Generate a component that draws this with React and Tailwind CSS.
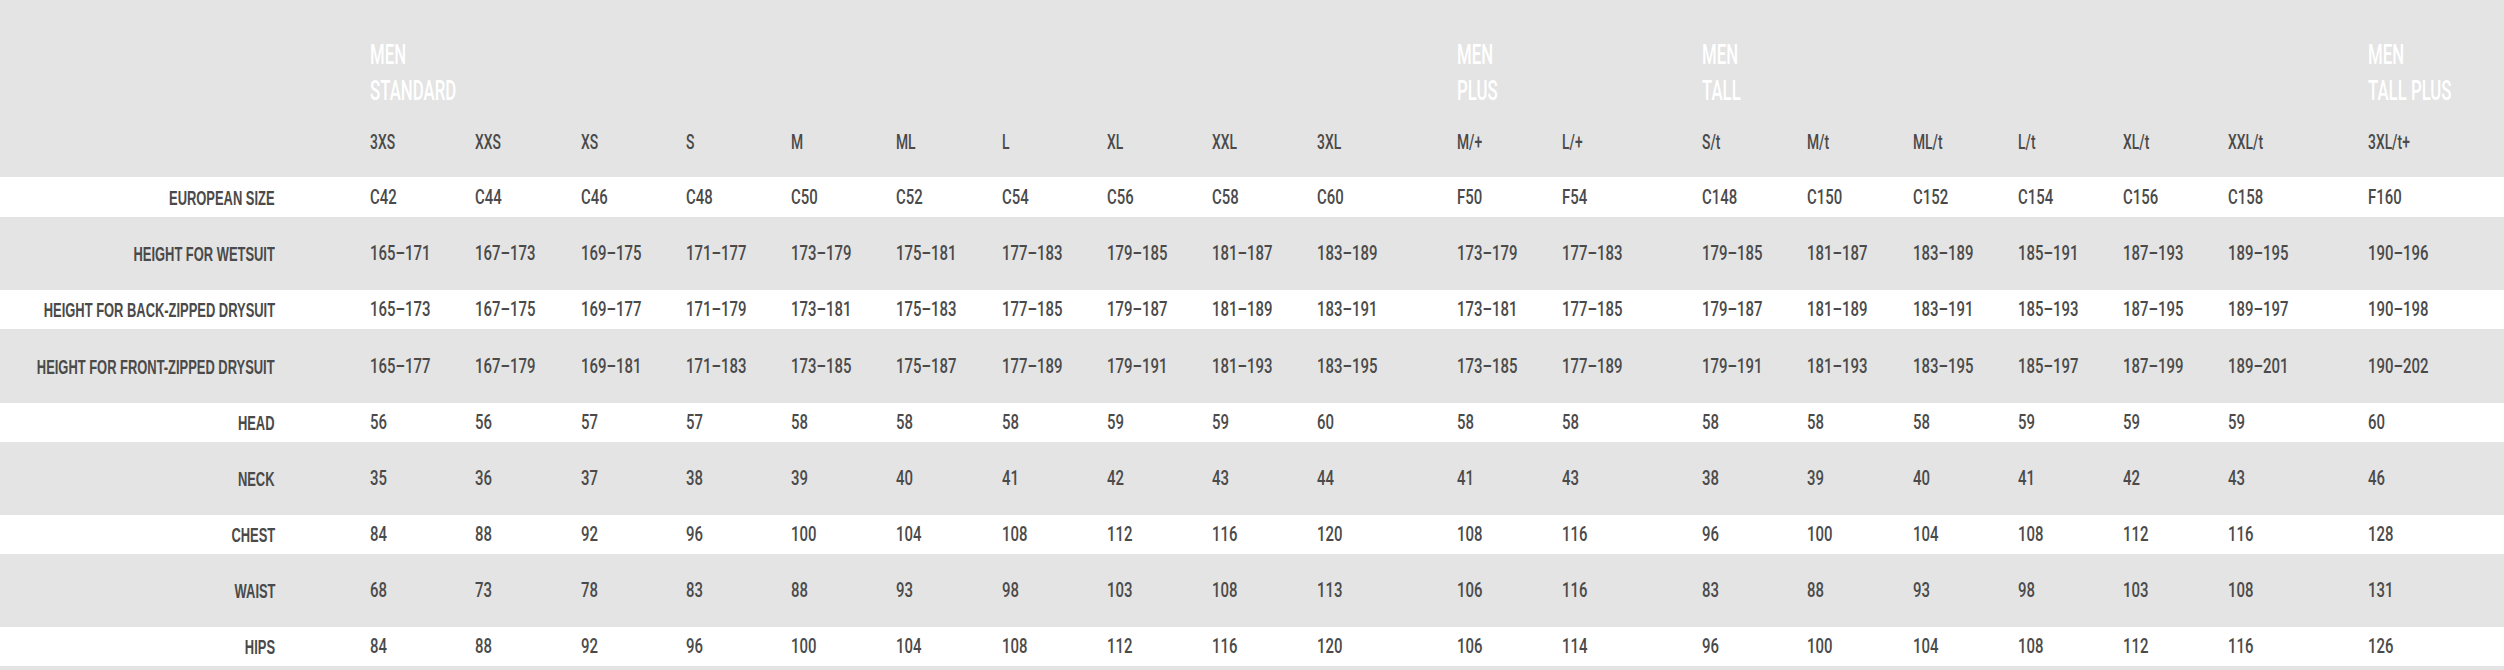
import React from "react";

const groups = [
  { title: ["MEN", "STANDARD"], sizes: ["3XS", "XXS", "XS", "S", "M", "ML", "L", "XL", "XXL", "3XL"] },
  { title: ["MEN", "PLUS"], sizes: ["M/+", "L/+"] },
  { title: ["MEN", "TALL"], sizes: ["S/t", "M/t", "ML/t", "L/t", "XL/t", "XXL/t"] },
  { title: ["MEN", "TALL PLUS"], sizes: ["3XL/t+"] },
];

const cols = [];
groups.forEach((g, gi) => {
  g.sizes.forEach((s, si) => {
    cols.push({ size: s, title: si === 0 ? g.title : null, groupStart: si === 0 && gi > 0 });
  });
});

const rows = [
  { label: "EUROPEAN SIZE", h: "h-[40px]", white: true, v: "C42 C44 C46 C48 C50 C52 C54 C56 C58 C60 F50 F54 C148 C150 C152 C154 C156 C158 F160" },
  { label: "HEIGHT FOR WETSUIT", h: "h-[73px]", white: false, v: "165–171 167–173 169–175 171–177 173–179 175–181 177–183 179–185 181–187 183–189 173–179 177–183 179–185 181–187 183–189 185–191 187–193 189–195 190–196" },
  { label: "HEIGHT FOR BACK-ZIPPED DRYSUIT", h: "h-[39px]", white: true, v: "165–173 167–175 169–177 171–179 173–181 175–183 177–185 179–187 181–189 183–191 173–181 177–185 179–187 181–189 183–191 185–193 187–195 189–197 190–198" },
  { label: "HEIGHT FOR FRONT-ZIPPED DRYSUIT", h: "h-[74px]", white: false, v: "165–177 167–179 169–181 171–183 173–185 175–187 177–189 179–191 181–193 183–195 173–185 177–189 179–191 181–193 183–195 185–197 187–199 189–201 190–202" },
  { label: "HEAD", h: "h-[39px]", white: true, v: "56 56 57 57 58 58 58 59 59 60 58 58 58 58 58 59 59 59 60" },
  { label: "NECK", h: "h-[73px]", white: false, v: "35 36 37 38 39 40 41 42 43 44 41 43 38 39 40 41 42 43 46" },
  { label: "CHEST", h: "h-[39px]", white: true, v: "84 88 92 96 100 104 108 112 116 120 108 116 96 100 104 108 112 116 128" },
  { label: "WAIST", h: "h-[73px]", white: false, v: "68 73 78 83 88 93 98 103 108 113 106 116 83 88 93 98 103 108 131" },
  { label: "HIPS", h: "h-[39px]", white: true, v: "84 88 92 96 100 104 108 112 116 120 106 114 96 100 104 108 112 116 126" },
];

const gridCls =
  "grid grid-cols-[370px_repeat(10,105.25px)_139.75px_105.25px_139.75px_repeat(5,105.25px)_139.75px_1fr]";

const valFont = { fontFamily: "Roboto, 'Liberation Sans', sans-serif" };
const labelFont = { fontFamily: "'Liberation Sans', Arial, sans-serif" };

function HeaderRow() {
  return (
    <div className={`${gridCls} h-[177px]`}>
      <div />
      {cols.map((c, i) => (
        <div key={i} className={`flex flex-col pt-[37px] whitespace-nowrap ${c.groupStart ? "pl-[34.5px]" : ""}`}>
          <div className="h-[72px]">
            {c.title &&
              c.title.map((t, j) => (
                <div key={j} className="h-[36px] leading-[36px]">
                  <span
                    className="inline-block origin-left scale-x-[0.6] text-[28px] font-medium leading-[36px] text-white"
                    style={valFont}
                  >
                    {t}
                  </span>
                </div>
              ))}
          </div>
          <div className="mt-[23px] h-[21px] leading-[21px]">
            <span
              className="inline-block origin-left scale-x-[0.66] text-[21px] font-medium leading-[21px] text-[#4a4a4a]"
              style={valFont}
            >
              {c.size}
            </span>
          </div>
        </div>
      ))}
    </div>
  );
}

function DataRow({ row }) {
  const vals = row.v.split(" ");
  return (
    <div className={`${gridCls} ${row.h} ${row.white ? "bg-white" : ""}`}>
      <div className="flex items-center justify-end pr-[95px] whitespace-nowrap">
        <span
          className="inline-block origin-right scale-x-[0.615] text-[21px] font-bold leading-[21px] text-[#4a4a4a]"
          style={labelFont}
        >
          {row.label}
        </span>
      </div>
      {vals.map((v, i) => (
        <div key={i} className={`flex items-center whitespace-nowrap ${cols[i].groupStart ? "pl-[34.5px]" : ""}`}>
          <span
            className="inline-block origin-left scale-x-[0.71] text-[21px] font-medium leading-[21px] text-[#4a4a4a]"
            style={valFont}
          >
            {v}
          </span>
        </div>
      ))}
    </div>
  );
}

export default function App() {
  return (
    <div className="min-h-screen w-full overflow-hidden bg-[#e4e4e4]">
      <HeaderRow />
      {rows.map((r) => (
        <DataRow key={r.label} row={r} />
      ))}
    </div>
  );
}
